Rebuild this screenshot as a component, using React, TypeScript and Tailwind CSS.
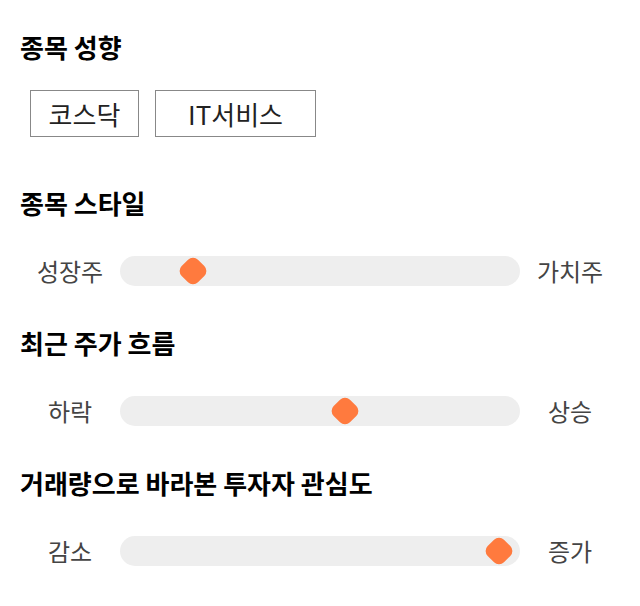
const font = { fontFamily: '"Noto Sans CJK KR", "Noto Sans", sans-serif' }

function Heading({ children }: { children: React.ReactNode }) {
  return <h2 className="h-9 px-5 text-[26px] leading-9 font-bold text-black">{children}</h2>
}

function Slider({ left, right, pos }: { left: string; right: string; pos: number }) {
  return (
    <div className="flex h-[30px] items-center px-5">
      <div className="w-[100px] text-center text-[24px] leading-[30px] text-[#444]">{left}</div>
      <div className="relative h-[30px] flex-1 rounded-full bg-[#eeeeee]">
        <div
          className="absolute top-1/2 h-[23px] w-[23px] -translate-x-1/2 -translate-y-1/2 rotate-45 rounded-[7px] bg-[#ff7a3e]"
          style={{ left: pos }}
        />
      </div>
      <div className="w-[100px] text-center text-[24px] leading-[30px] text-[#444]">{right}</div>
    </div>
  )
}

export default function App() {
  return (
    <div className="h-[606px] w-[640px] bg-white pt-[29px]" style={font}>
      <Heading>종목 성향</Heading>
      <div className="mt-[25px] flex gap-4 pl-[30px]">
        <div className="flex h-[47px] w-[109px] items-center justify-center border border-[#888] text-[26px] text-[#222]">
          코스닥
        </div>
        <div className="flex h-[47px] w-[161px] items-center justify-center border border-[#888] text-[26px] text-[#222]">
          IT서비스
        </div>
      </div>

      <div className="mt-[48px]">
        <Heading>종목 스타일</Heading>
      </div>
      <div className="mt-[35px]">
        <Slider left="성장주" right="가치주" pos={73} />
      </div>

      <div className="mt-[39px]">
        <Heading>최근 주가 흐름</Heading>
      </div>
      <div className="mt-[35px]">
        <Slider left="하락" right="상승" pos={225} />
      </div>

      <div className="mt-[39px]">
        <Heading>거래량으로 바라본 투자자 관심도</Heading>
      </div>
      <div className="mt-[35px]">
        <Slider left="감소" right="증가" pos={379} />
      </div>
    </div>
  )
}
